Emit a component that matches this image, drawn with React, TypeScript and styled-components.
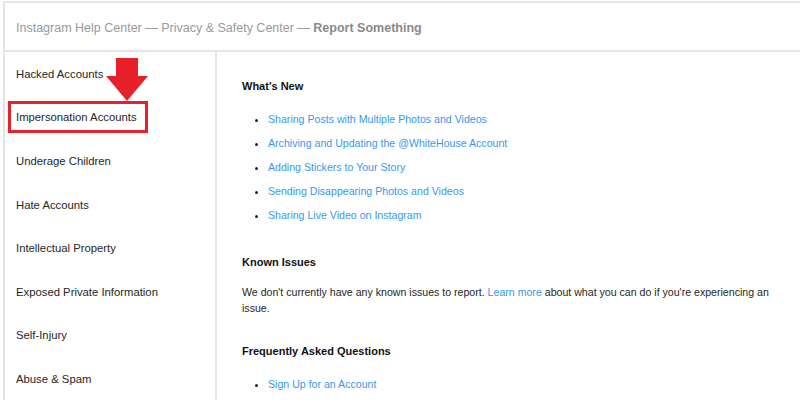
import React from "react";
import styled, { createGlobalStyle } from "styled-components";

const Global = createGlobalStyle`
  html, body { margin: 0; padding: 0; background: #fff; }
  body { font-family: "Liberation Sans", Arial, sans-serif; color: #262626; }
`;

const Frame = styled.div`
  width: 800px;
  height: 400px;
  overflow: hidden;
  box-sizing: border-box;
  padding: 1px 0 0 3px;
`;

const Shell = styled.div`
  border-top: 2px solid #e6e6e6;
  border-left: 2px solid #e6e6e6;
  height: 100%;
  display: flex;
  flex-direction: column;
`;

const Header = styled.div`
  flex-shrink: 0;
  height: 49px;
  box-sizing: border-box;
  padding: 3px 0 0 11px;
  border-bottom: 2px solid #e6e6e6;
  display: flex;
  align-items: center;
  font-size: 12.5px;
  color: #9a9a9a;
`;

const Strong = styled.b`
  font-weight: bold;
  color: #8a8a8a;
`;

const Body = styled.div`
  display: flex;
  flex: 1;
  min-height: 0;
`;

const Sidebar = styled.nav`
  flex-shrink: 0;
  width: 210px;
  border-right: 2px solid #e6e6e6;
  position: relative;
`;

const NavItem = styled.div`
  height: 43.6px;
  display: flex;
  align-items: center;
  padding-left: 11px;
  font-size: 11.3px;
  color: #262626;
  position: relative;
`;

const RedBox = styled.div`
  position: absolute;
  left: 3px;
  top: 5px;
  width: 140px;
  height: 32px;
  border: 3px solid #e8202a;
  box-sizing: border-box;
`;

const Arrow = styled.svg`
  position: absolute;
  left: 101px;
  top: 6px;
`;

const Main = styled.main`
  flex: 1;
  padding: 26px 20px 0 25px;
`;

const H = styled.h3`
  margin: 0;
  font-size: 11px;
  font-weight: bold;
  color: #111;
  line-height: 16px;
`;

const List = styled.ul`
  margin: 17px 0 0;
  padding: 0 0 0 26px;
  list-style: disc;
  font-size: 10.6px;
`;

const Li = styled.li`
  line-height: 16px;
  margin-bottom: 8px;
  color: #222;
`;

const Link = styled.a`
  color: #3897f0;
  text-decoration: none;
`;

const Para = styled.p`
  margin: 14px 0 0;
  font-size: 10.6px;
  line-height: 16px;
  color: #262626;
`;

const Section = styled.section<{ $gap: number }>`
  margin-top: ${(p) => p.$gap}px;
`;

const nav = [
  "Hacked Accounts",
  "Impersonation Accounts",
  "Underage Children",
  "Hate Accounts",
  "Intellectual Property",
  "Exposed Private Information",
  "Self-Injury",
  "Abuse & Spam",
];

const news = [
  "Sharing Posts with Multiple Photos and Videos",
  "Archiving and Updating the @WhiteHouse Account",
  "Adding Stickers to Your Story",
  "Sending Disappearing Photos and Videos",
  "Sharing Live Video on Instagram",
];

export default function App() {
  return (
    <>
      <Global />
      <Frame>
        <Shell>
          <Header>
            Instagram Help Center — Privacy &amp; Safety Center —&nbsp;<Strong>Report Something</Strong>
          </Header>
          <Body>
            <Sidebar>
              <Arrow width="42" height="44" viewBox="0 0 42 44">
                <polygon points="10,0 32,0 32,18 42,18 21,43 0,18 10,18" fill="#e8202a" />
              </Arrow>
              {nav.map((n, i) => (
                <NavItem key={n}>
                  {i === 1 && <RedBox />}
                  {n}
                </NavItem>
              ))}
            </Sidebar>
            <Main>
              <H>What's New</H>
              <List>
                {news.map((n) => (
                  <Li key={n}>
                    <Link href="#">{n}</Link>
                  </Li>
                ))}
              </List>
              <Section $gap={31}>
                <H>Known Issues</H>
                <Para>
                  We don't currently have any known issues to report. <Link href="#">Learn more</Link> about what you
                  can do if you're experiencing an issue.
                </Para>
              </Section>
              <Section $gap={27}>
                <H>Frequently Asked Questions</H>
                <List>
                  <Li>
                    <Link href="#">Sign Up for an Account</Link>
                  </Li>
                </List>
              </Section>
            </Main>
          </Body>
        </Shell>
      </Frame>
    </>
  );
}
